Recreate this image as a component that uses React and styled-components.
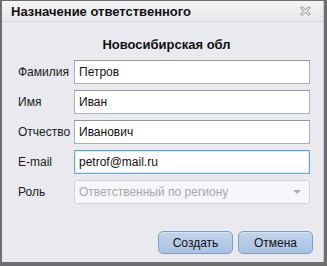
import React from "react"
import styled, { createGlobalStyle } from "styled-components"

const GlobalStyle = createGlobalStyle`
  html, body {
    margin: 0;
    padding: 0;
    background: #6e6e6e;
    font-family: "Liberation Sans", Arial, sans-serif;
  }
`

const Window = styled.div`
  box-sizing: border-box;
  width: 322px;
  height: 261px;
  margin: 1px 0 0 2px;
  display: flex;
  flex-direction: column;
  background: #e8eaed;
  border-right: 1px solid #c9ccd0;
`

const TitleBar = styled.div`
  height: 20px;
  flex-shrink: 0;
  display: flex;
  align-items: center;
  justify-content: space-between;
  padding: 0 12px 0 9px;
  background: linear-gradient(#f4f4f4, #e6e8ea);
  border-bottom: 1px solid #d4d7db;
  font-weight: bold;
  font-size: 13px;
  color: #111;
`

const CloseButton = styled.svg`
  width: 11px;
  height: 10px;
`

const Body = styled.div`
  flex: 1;
  display: flex;
  flex-direction: column;
  padding: 15px 10px 8px 14px;
`

const Heading = styled.div`
  text-align: center;
  font-weight: bold;
  font-size: 13px;
  color: #111;
  padding-left: 4px;
  margin-bottom: 8px;
`

const Form = styled.div`
  display: grid;
  grid-template-columns: 58px 236px;
  grid-auto-rows: 24px;
  row-gap: 6px;
  align-items: center;
`

const Label = styled.label`
  font-size: 12px;
  color: #1a1a1a;
  padding-left: 2px;
`

const Input = styled.div`
  box-sizing: border-box;
  height: 24px;
  display: flex;
  align-items: center;
  padding: 0 4px;
  font-size: 12px;
  color: #111;
  background: #fff;
  border: 1px solid ${p => (p.$focused ? "#6fa9cc" : "#a8afb7")};
  border-top-color: ${p => (p.$focused ? "#5f9fc6" : "#8f969e")};
  box-shadow: ${p => (p.$focused ? "inset 0 0 0 1px #d5eaf5" : "none")};
`

const Select = styled.div`
  box-sizing: border-box;
  height: 24px;
  display: flex;
  align-items: center;
  justify-content: space-between;
  padding: 0 8px 0 4px;
  font-size: 12px;
  color: #a6a9ad;
  background: #f5f6f7;
  border: 1px solid #d2d5d9;
  border-radius: 3px;
`

const Arrow = styled.span`
  width: 0;
  height: 0;
  border-left: 4px solid transparent;
  border-right: 4px solid transparent;
  border-top: 4px solid #a9acb0;
`

const Footer = styled.div`
  margin-top: auto;
  display: flex;
  justify-content: flex-end;
  gap: 5px;
`

const Button = styled.button`
  box-sizing: border-box;
  width: 75px;
  height: 23px;
  font-family: inherit;
  font-size: 12px;
  color: #111;
  border: 1px solid #7f9ec6;
  border-radius: 5px;
  background: linear-gradient(#c3d4ea, #a9c2e4);
  box-shadow: inset 0 1px 0 #d8e4f3;
  padding: 0;
`

const rows = [
  { label: "Фамилия", value: "Петров" },
  { label: "Имя", value: "Иван" },
  { label: "Отчество", value: "Иванович" },
  { label: "E-mail", value: "petrof@mail.ru", focused: true },
]

const App = () => (
  <>
    <GlobalStyle />
    <Window>
      <TitleBar>
        Назначение ответственного
        <CloseButton viewBox="0 0 11 10">
          <path
            d="M0.5 2 L2 0.5 L5.5 3.5 L9 0.5 L10.5 2 L7.3 5 L10.5 8 L9 9.5 L5.5 6.5 L2 9.5 L0.5 8 L3.7 5 Z"
            fill="#e4e4e4"
            stroke="#999"
            strokeWidth="1"
          />
        </CloseButton>
      </TitleBar>
      <Body>
        <Heading>Новосибирская обл</Heading>
        <Form>
          {rows.map(r => (
            <React.Fragment key={r.label}>
              <Label>{r.label}</Label>
              <Input $focused={r.focused}>{r.value}</Input>
            </React.Fragment>
          ))}
          <Label>Роль</Label>
          <Select>
            Ответственный по региону
            <Arrow />
          </Select>
        </Form>
        <Footer>
          <Button>Создать</Button>
          <Button>Отмена</Button>
        </Footer>
      </Body>
    </Window>
  </>
)

export default App
